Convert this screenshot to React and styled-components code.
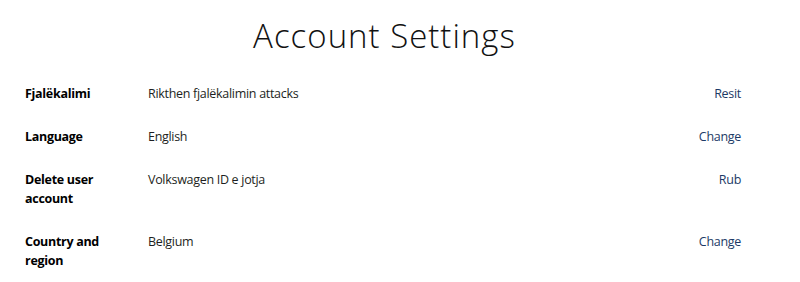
import React from 'react';
import styled, { createGlobalStyle } from 'styled-components';

const GlobalStyle = createGlobalStyle`
body {
  margin: 0;
  background: #ffffff;
  font-family: "Open Sans", Roboto, sans-serif;
}
`;

const Page = styled.div`
width: 800px;
padding: 13px 0 0;
`;

const Title = styled.h1`
margin: 0 0 25px;
padding-right: 31px;
font-family: "Open Sans", sans-serif;
font-weight: 300;
font-size: 33px;
line-height: 46px;
letter-spacing: 1px;
text-align: center;
color: #111111;
`;

const List = styled.div`
display: flex;
flex-direction: column;
gap: 24px;
padding: 0 59px 0 25px;
`;

const Row = styled.div`
display: grid;
grid-template-columns: 123px 1fr auto;
font-size: 12.5px;
line-height: 19px;
letter-spacing: -0.3px;
`;

const Label = styled.div`
font-weight: 700;
color: #000000;
width: 90px;
`;

const Value = styled.div`
color: #1d1f22;
`;

const Action = styled.a`
color: #1c3a66;
text-align: right;
cursor: pointer;
`;

const rows = [
  { label: 'Fjalëkalimi', value: 'Rikthen fjalëkalimin attacks', action: 'Resit' },
  { label: 'Language', value: 'English', action: 'Change' },
  { label: 'Delete user account', value: 'Volkswagen ID e jotja', action: 'Rub' },
  { label: 'Country and region', value: 'Belgium', action: 'Change' },
];

export default function App() {
  return (
    <Page>
      <GlobalStyle />
      <Title>Account Settings</Title>
      <List>
        {rows.map((r) => (
          <Row key={r.label}>
            <Label>{r.label}</Label>
            <Value>{r.value}</Value>
            <Action>{r.action}</Action>
          </Row>
        ))}
      </List>
    </Page>
  );
}
